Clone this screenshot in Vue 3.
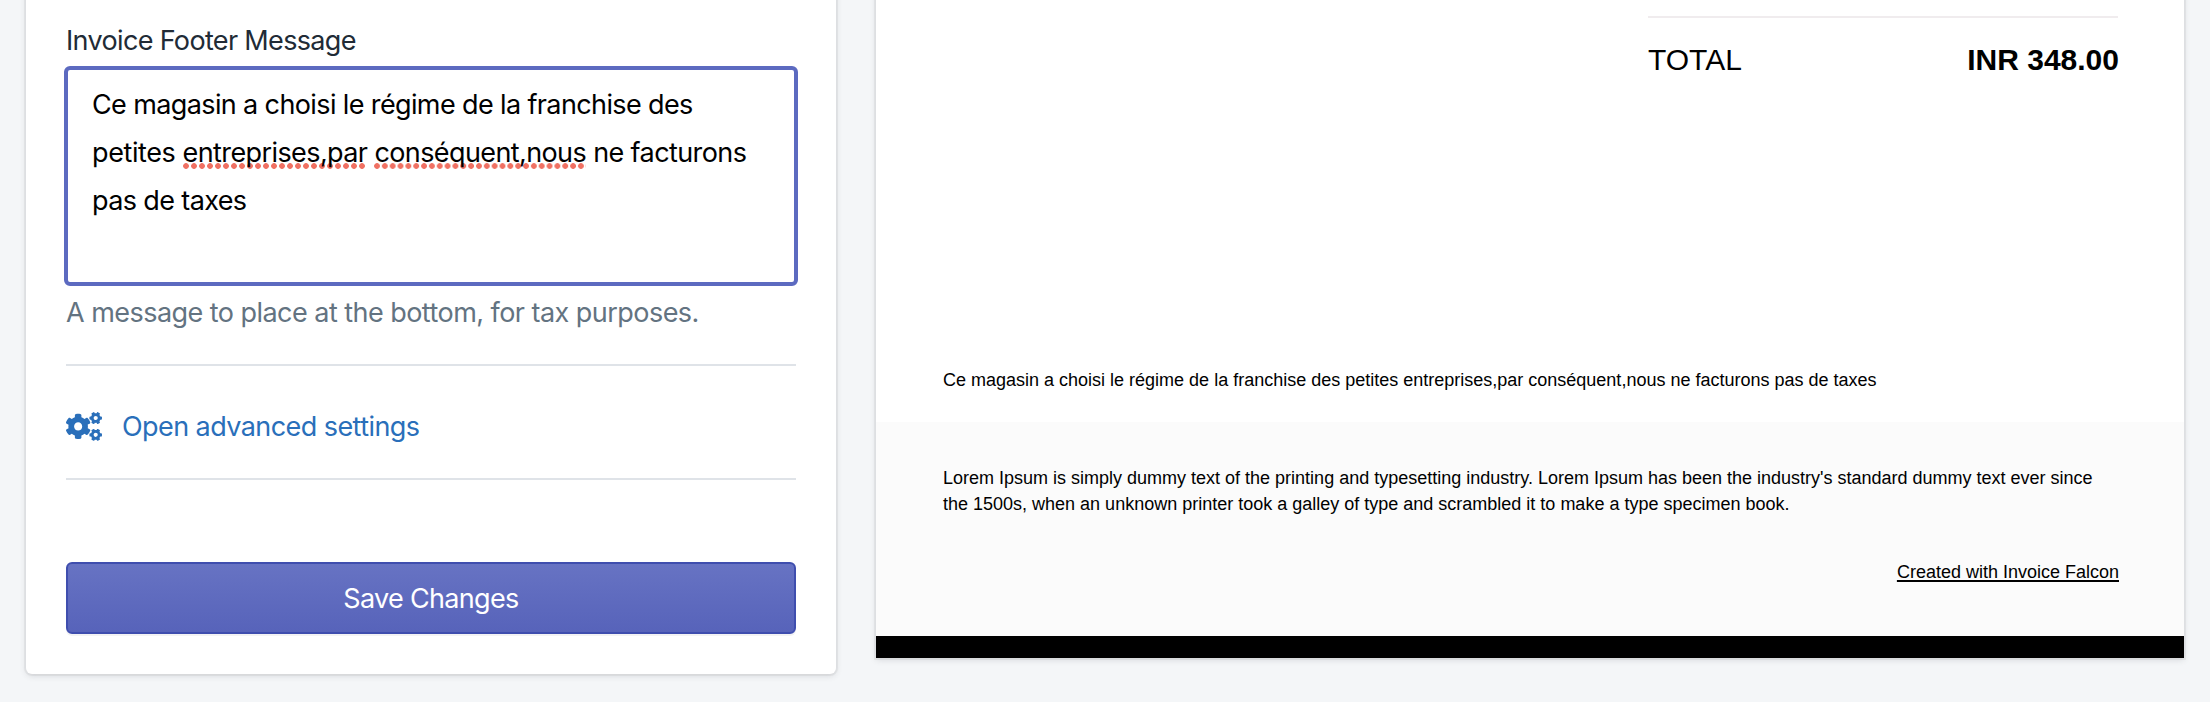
<script setup>
const smallGear =
  'M512.1 191l-8.2 14.3c-3 5.3-9.4 7.5-15.1 5.4-11.8-4.4-22.6-10.7-32.1-18.6-4.6-3.8-5.8-10.5-2.8-15.7l8.2-14.3c-6.9-8-12.3-17.3-15.9-27.4h-16.5c-6 0-11.2-4.3-12.2-10.3-2-12-2.1-24.6 0-37.1 1-6 6.2-10.4 12.2-10.4h16.5c3.6-10.1 9-19.4 15.9-27.4l-8.2-14.3c-3-5.2-1.9-11.9 2.8-15.7 9.5-7.9 20.4-14.2 32.1-18.6 5.7-2.1 12.1.1 15.1 5.4l8.2 14.3c10.5-1.9 21.2-1.9 31.7 0L552 6.3c3-5.3 9.4-7.5 15.1-5.4 11.8 4.4 22.6 10.7 32.1 18.6 4.6 3.8 5.8 10.5 2.8 15.7l-8.2 14.3c6.9 8 12.3 17.3 15.9 27.4h16.5c6 0 11.2 4.3 12.2 10.3 2 12 2.1 24.6 0 37.1-1 6-6.2 10.4-12.2 10.4h-16.5c-3.6 10.1-9 19.4-15.9 27.4l8.2 14.3c3 5.2 1.9 11.9-2.8 15.7-9.5 7.9-20.4 14.2-32.1 18.6-5.7 2.1-12.1-.1-15.1-5.4l-8.2-14.3c-10.4 1.9-21.2 1.9-31.7 0zm-10.5-58.8c38.5 29.6 82.4-14.3 52.8-52.8-38.5-29.7-82.4 14.3-52.8 52.8z'
const largeGear =
  'M386.3 286.1l33.7 16.8c10.1 5.8 14.5 18.1 10.5 29.1-8.9 24.2-26.4 46.4-42.6 65.8-7.4 8.9-20.2 11.1-30.3 5.3l-29.1-16.8c-16 13.7-34.6 24.6-54.9 31.7v33.6c0 11.6-8.3 21.6-19.7 23.6-24.6 4.2-50.4 4.4-75.9 0-11.5-2-20-11.9-20-23.6V418c-20.3-7.2-38.9-18-54.9-31.7L74 403c-10 5.8-22.9 3.6-30.3-5.3-16.2-19.4-33.3-41.6-42.2-65.7-4-10.9.4-23.2 10.5-29.1l33.3-16.8c-3.9-20.9-3.9-42.4 0-63.4L12 205.8c-10.1-5.8-14.6-18.1-10.5-29 8.9-24.2 26-46.4 42.2-65.8 7.4-8.9 20.2-11.1 30.3-5.3l29.1 16.8c16-13.7 34.6-24.6 54.9-31.7V57.1c0-11.5 8.2-21.5 19.6-23.5 24.6-4.2 50.5-4.4 76-.1 11.5 2 20 11.9 20 23.6v33.6c20.3 7.2 38.9 18 54.9 31.7l29.1-16.8c10-5.8 22.9-3.6 30.3 5.3 16.2 19.4 33.2 41.6 42.1 65.8 4 10.9.1 23.2-10 29.1l-33.7 16.8c3.9 21 3.9 42.5 0 63.5zm-117.6 21.1c59.2-77-28.7-164.9-105.7-105.7-59.2 77 28.7 164.9 105.7 105.7z'
</script>

<template>
  <main class="page">
    <section class="settings">
      <label class="label">Invoice Footer Message</label>
      <div class="field">
        <div class="line line-1">Ce magasin a choisi le régime de la franchise des</div>
        <div class="line line-2"><span class="lead">petites </span><span class="misspelt">entreprises,par</span> <span class="misspelt">conséquent,nous</span> ne facturons</div>
        <div class="line line-3">pas de taxes</div>
      </div>
      <p class="help">A message to place at the bottom, for tax purposes.</p>
      <div class="divider"></div>
      <a class="advanced">
        <svg class="cogs" viewBox="0 0 640 512" fill="currentColor">
          <path :d="smallGear" />
          <path :d="largeGear" />
          <path :d="smallGear" transform="translate(0 298.7)" />
        </svg>
        <span class="advanced-text">Open advanced settings</span>
      </a>
      <div class="divider"></div>
      <button class="save" type="button"><span>Save Changes</span></button>
    </section>

    <section class="invoice">
      <div class="total">
        <span>TOTAL</span>
        <strong>INR 348.00</strong>
      </div>
      <p class="note">Ce magasin a choisi le régime de la franchise des petites entreprises,par conséquent,nous ne facturons pas de taxes</p>
      <footer class="footer">
        <p class="lorem">Lorem Ipsum is simply dummy text of the printing and typesetting industry. Lorem Ipsum has been the industry's standard dummy text ever since<br>the 1500s, when an unknown printer took a galley of type and scrambled it to make a type specimen book.</p>
        <a class="credit">Created with Invoice Falcon</a>
      </footer>
    </section>
  </main>
</template>

<style>
body {
  margin: 0;
  background: #f4f6f8;
}
</style>

<style scoped>
.page {
  box-sizing: border-box;
  width: 2210px;
  height: 702px;
  padding: 0 26px;
  display: flex;
  align-items: flex-start;
  gap: 40px;
  overflow: hidden;
  background: #f4f6f8;
}

.settings,
.invoice {
  box-sizing: border-box;
  box-shadow: 0 0 0 2px rgba(63, 63, 68, 0.06), 0 2px 6px rgba(63, 63, 68, 0.15);
}

.settings {
  display: flex;
  flex-direction: column;
  width: 810px;
  height: 694px;
  margin-top: -20px;
  padding: 45px 40px 40px;
  border-radius: 6px;
  background: #fff;
  font-family: Inter, "Liberation Sans", sans-serif;
  font-size: 27px;
  font-weight: 380;
  line-height: 32px;
  letter-spacing: -0.6px;
}

.label {
  color: #212b36;
  letter-spacing: -0.66px;
}

.field {
  box-sizing: border-box;
  height: 220px;
  margin: 9px -2px 11px;
  padding: 11px 20px 11px 24px;
  border: 4px solid #5c6ac0;
  border-radius: 6px;
  color: #000;
}

.line {
  line-height: 48px;
  letter-spacing: -0.62px;
  white-space: nowrap;
}

.line-2 {
  letter-spacing: -0.6px;
}

.lead {
  letter-spacing: -0.4px;
}

.misspelt {
  background: radial-gradient(circle at 3px 3px, #f07163 2.5px, transparent 3.2px) left bottom / 8px 6px round no-repeat;
}

.help {
  margin: 0 0 35px;
  color: #637381;
  letter-spacing: -0.54px;
  white-space: nowrap;
}

.divider {
  height: 2px;
  flex: none;
  background: #dfe3e8;
}

.advanced {
  display: flex;
  align-items: center;
  height: 32px;
  margin: 44px 0 36px;
  color: #2a6fba;
}

.cogs {
  width: 36px;
  height: 29px;
  margin-right: 20px;
}

.advanced-text {
  padding-top: 2px;
  letter-spacing: -0.57px;
}

.save {
  box-sizing: border-box;
  width: 100%;
  height: 72px;
  margin-top: 82px;
  padding: 2px 0 0;
  border: 2px solid #3f4eae;
  border-radius: 6px;
  background: linear-gradient(#6773c3, #5763ba);
  box-shadow: 0 2px 0 rgba(22, 29, 37, 0.05);
  color: #fff;
  font: inherit;
  letter-spacing: -0.68px;
}

.invoice {
  display: flex;
  flex-direction: column;
  width: 1308px;
  height: 678px;
  margin-top: -20px;
  padding-top: 36px;
  border-bottom: 22px solid #000;
  background: #fff;
  color: #000;
  font-family: "Liberation Sans", Arial, sans-serif;
  font-size: 18px;
  line-height: 26px;
}

.total {
  display: flex;
  justify-content: space-between;
  width: 470px;
  margin: 0 66px 0 auto;
  padding-top: 24px;
  border-top: 2px solid #f0ecee;
  font-size: 30px;
  line-height: 36px;
}

.total strong {
  margin-right: -1px;
}

.note {
  margin: 289px 66px 29px 67px;
}

.footer {
  display: flex;
  flex: 1;
  flex-direction: column;
  padding: 43px 65px 0 67px;
  background: #fbfbfb;
}

.lorem {
  margin: 0 0 42px;
  white-space: nowrap;
}

.credit {
  align-self: flex-end;
  text-decoration: underline;
  text-decoration-thickness: 2px;
  text-underline-offset: 2px;
}
</style>
